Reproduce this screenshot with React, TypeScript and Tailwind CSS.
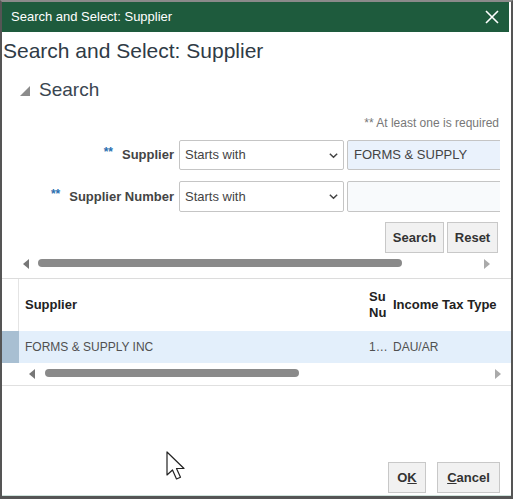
import React from 'react';

function Chevron() {
  return (
    <svg className="w-[11px] h-[11px] text-[#444]" viewBox="0 0 12 12" fill="none" stroke="currentColor" strokeWidth={1.6}>
      <path d="M2 4l4 4 4-4" />
    </svg>
  );
}

function ScrollBar({ left, thumbStart, thumbEnd, right }: { left: number; thumbStart: number; thumbEnd: number; right: number }) {
  return (
    <div className="relative h-[14px]">
      <span className="absolute top-[3px] w-0 h-0 border-y-[5px] border-y-transparent border-r-[6px] border-r-[#777]" style={{ left }} />
      <span className="absolute top-[3px] h-[8px] rounded-full bg-[#8a8a8a]" style={{ left: thumbStart, width: thumbEnd - thumbStart }} />
      <span className="absolute top-[3px] w-0 h-0 border-y-[5px] border-y-transparent border-l-[6px] border-l-[#aaa]" style={{ left: right }} />
    </div>
  );
}

export default function App() {
  return (
    <div className="w-[513px] h-[499px] bg-white flex flex-col border-t-2 border-t-[#8a8a8a] border-x-2 border-x-[#555] border-b-[3px] border-b-[#555] overflow-hidden font-['Liberation_Sans',Arial,sans-serif] text-[#333]">
      {/* Title bar */}
      <div className="h-[30px] shrink-0 bg-[#1e5b3d] flex items-center justify-between pl-[9px] pr-[10px] mr-[2px]">
        <span className="text-white text-[13px]">Search and Select: Supplier</span>
        <svg className="w-[14px] h-[14px]" viewBox="0 0 14 14" stroke="white" strokeWidth={1.6}>
          <path d="M1 1l12 12M13 1L1 13" />
        </svg>
      </div>

      <div className="flex-1 flex flex-col relative">
        <h1 className="text-[21px] leading-[26px] pl-[1px] pt-[6px] text-[#2f3b46]">Search and Select: Supplier</h1>

        <div className="flex items-center gap-[9px] pl-[18px] mt-[14px] h-[24px]">
          <span className="w-0 h-0 border-l-[10px] border-l-transparent border-b-[10px] border-b-[#8c8c8c] mt-[2px]" />
          <span className="text-[19px] text-[#3a4550]">Search</span>
        </div>

        <div className="mt-[14px] pr-[12px] text-right text-[12px] leading-[15px] text-[#777]">** At least one is required</div>

        {/* Form */}
        <div className="mt-[9px] w-[498px] overflow-hidden flex flex-col gap-[11px]">
          <div className="flex items-center h-[30px]">
            <div className="w-[177px] shrink-0 flex justify-end items-center pr-[5px] gap-[9px]">
              <span className="text-[#2a6fb0] text-[12px] font-bold mb-[6px]">**</span>
              <span className="text-[13px] font-bold text-[#444]">Supplier</span>
            </div>
            <div className="w-[165px] h-[30px] shrink-0 border border-[#c5c5c5] rounded-[2px] bg-white flex items-center justify-between pl-[5px] pr-[4px] text-[13px] text-[#444]">
              <span>Starts with</span>
              <Chevron />
            </div>
            <div className="ml-[3px] w-[180px] h-[30px] shrink-0 border border-[#c5c5c5] rounded-[2px] bg-[#eaf2fc] flex items-center pl-[6px] text-[13px] text-[#444]">
              FORMS &amp; SUPPLY
            </div>
          </div>
          <div className="flex items-center h-[31px]">
            <div className="w-[177px] shrink-0 flex justify-end items-center pr-[5px] gap-[9px]">
              <span className="text-[#2a6fb0] text-[12px] font-bold mb-[6px]">**</span>
              <span className="text-[13px] font-bold text-[#444]">Supplier Number</span>
            </div>
            <div className="w-[165px] h-[31px] shrink-0 border border-[#c5c5c5] rounded-[2px] bg-white flex items-center justify-between pl-[5px] pr-[4px] text-[13px] text-[#444]">
              <span>Starts with</span>
              <Chevron />
            </div>
            <div className="ml-[3px] w-[180px] h-[31px] shrink-0 border border-[#c5c5c5] rounded-[2px] bg-[#f8fafc]" />
          </div>
        </div>

        <div className="mt-[10px] w-[496px] flex justify-end gap-[3px]">
          <button className="w-[59px] h-[31px] border border-[#c8c8c8] bg-[#f1f1f1] text-[13px] font-bold text-[#333]">Search</button>
          <button className="w-[51px] h-[31px] border border-[#c8c8c8] bg-[#f1f1f1] text-[13px] font-bold text-[#333]">Reset</button>
        </div>

        <div className="mt-[3px]">
          <ScrollBar left={21} thumbStart={36} thumbEnd={400} right={482} />
        </div>

        {/* Table */}
        <div className="mt-[8px] border-t border-[#dcdcdc]">
          <div className="flex h-[52px]">
            <div className="w-[17px] shrink-0 border-r border-[#e4e4e4]" />
            <div className="flex-1 flex items-center pl-[6px] text-[13px] font-bold text-[#222]">Supplier</div>
            <div className="w-[24px] shrink-0 flex flex-col justify-center text-[13px] font-bold text-[#222] leading-[16px] overflow-hidden">
              <span>Su</span>
              <span>Nu</span>
            </div>
            <div className="w-[118px] shrink-0 flex items-center text-[13px] font-bold text-[#222] whitespace-nowrap overflow-hidden">Income Tax Type</div>
          </div>
          <div className="flex h-[32px] bg-[#e3effb]">
            <div className="w-[17px] shrink-0 bg-[#a8bfd2]" />
            <div className="flex-1 flex items-center pl-[6px] text-[12px] text-[#505050]">FORMS &amp; SUPPLY INC</div>
            <div className="w-[24px] shrink-0 flex items-center text-[12px] text-[#505050]">1…</div>
            <div className="w-[118px] shrink-0 flex items-center text-[12px] text-[#505050]">DAU/AR</div>
          </div>
          <div className="border-b border-[#e0e0e0] pb-[5px] pt-[3px]">
            <ScrollBar left={27} thumbStart={43} thumbEnd={297} right={493} />
          </div>
        </div>

        {/* Cursor */}
        <svg className="absolute left-[164px] top-[419px] w-[22px] h-[32px]" viewBox="0 0 22 32" fill="white" stroke="#222" strokeWidth={1.2} strokeLinejoin="round">
          <path d="M1 1v23l5.5-5 4 9 4-1.8-4-8.7h7.5z" />
        </svg>

        <div className="mt-auto mb-[2px] w-[498px] flex justify-end gap-[11px]">
          <button className="w-[38px] h-[31px] border border-[#c8c8c8] bg-[#f1f1f1] text-[13px] font-bold text-[#333]">
            O<span className="underline">K</span>
          </button>
          <button className="w-[63px] h-[31px] border border-[#c8c8c8] bg-[#f1f1f1] text-[13px] font-bold text-[#333]">
            <span className="underline">C</span>ancel
          </button>
        </div>
        <div className="h-[1px] bg-[#cfe3dc]" />
      </div>
    </div>
  );
}
